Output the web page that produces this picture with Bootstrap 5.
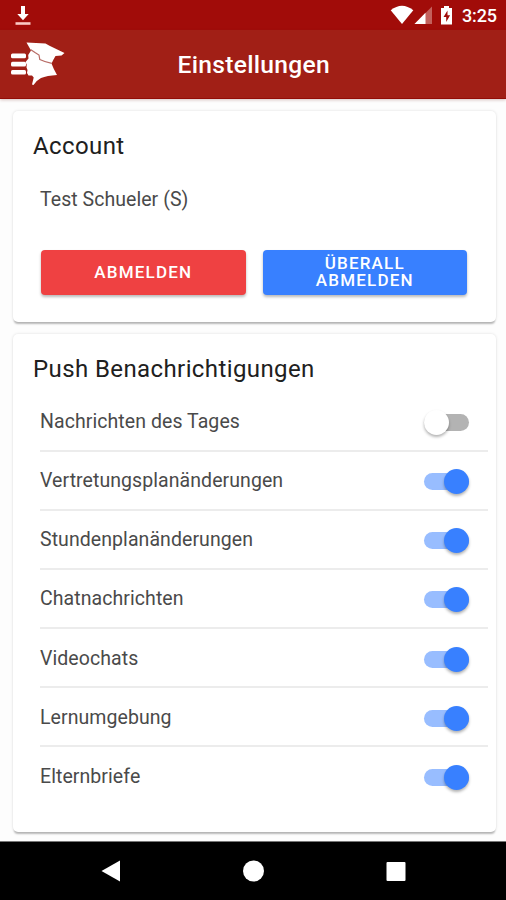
<!DOCTYPE html>
<html lang="de">
<head>
<meta charset="utf-8">
<meta name="viewport" content="width=device-width, initial-scale=1">
<title>Einstellungen</title>
<link href="https://cdn.jsdelivr.net/npm/bootstrap@5.3.0/dist/css/bootstrap.min.css" rel="stylesheet">
<style>
body{font-family:Roboto,"Liberation Sans",sans-serif;background:#fdfdfd;width:506px;height:900px;overflow:hidden;color:#222}
.status-bar{height:30px;background:#a10c09;padding:0 9px 0 14px}
.clock{font-size:18px;font-weight:500;line-height:30px;margin-left:7px;padding-top:2px;letter-spacing:-.1px}
.app-bar{height:69px;background:#a11f16;border-bottom:1px solid #920d07;box-shadow:0 1px 3px rgba(120,40,30,.28);z-index:1}
.app-title{font-size:24.6px;font-weight:500;letter-spacing:.3px;line-height:28px;padding-top:2px}
.app-bar .brand-logo{width:177.5px;padding-left:10px}
.main-area{padding:12px 10px 0 13px}
.panel{border:0;border-radius:5px;background:#fff;box-shadow:0 3px 2px -1px rgba(0,0,0,.26),0 0 3px rgba(0,0,0,.13)}
.account{height:211px;margin-bottom:12px}
.push{height:498px}
.panel-title{font-size:24px;font-weight:400;line-height:28px;letter-spacing:.4px;padding:21px 20px 0;margin:0 0 1px;color:#202020}
.user-name{font-size:19.5px;line-height:24px;margin:28px 0 0 27px;color:#4a4a4a;letter-spacing:.05px}
.actions{padding:38px 29px 0 28px;gap:17px}
.action-btn{height:44.5px;border:0;border-radius:4px;padding:0;font-size:17px;font-weight:500;line-height:17px;letter-spacing:1.2px;box-shadow:0 2px 3px rgba(0,0,0,.28);color:#fff}
.btn-logout,.btn-logout:hover{background:#ef4142;color:#fff}
.btn-all,.btn-all:hover{background:#3880ff;color:#fff}
.settings{margin:9.5px 8px 0 27px}
.setting{height:59.15px;border-bottom:2px solid #ececec;padding-right:19px;font-size:19.5px;letter-spacing:.07px;color:#4a4a4a;padding-top:1px}
.setting:last-child{border-bottom:0;height:58px}
.toggle{width:45px;height:17px;border-radius:9px;background:#98bdff;margin-top:2px}
.toggle::after{content:"";width:25px;height:25px;border-radius:50%;background:#3880ff;box-shadow:0 2px 3px rgba(0,0,0,.3);flex:none}
.toggle.off{background:#b3b3b3}
.toggle.off::after{background:#fff}
.nav-keys{height:59px;background:#000;border-top:1px solid #777}
</style>
<script src="https://cdn.jsdelivr.net/npm/bootstrap@5.3.0/dist/js/bootstrap.bundle.min.js"></script>
</head>
<body class="d-flex flex-column">
<div class="status-bar d-flex align-items-center text-white">
  <svg width="18" height="30" viewBox="0 0 18 30"><path d="M7 6h4v8h3.700L9 20.300 3.300 14H7z" fill="#fff"/><path d="M1.500 22.200h15v2.600h-15z" fill="#fbc9c5"/></svg>
  <svg class="ms-auto" width="66" height="30" viewBox="0 0 66 30"><path d="M1.700 10.300Q13 1.200 24.300 10.300L13 24z" fill="#fff"/><path d="M43 6.500V24H25.500z" fill="#c3605c"/><path d="M36.500 12.800V24H25.500z" fill="#fff"/><path d="M52 8h3V6h5v2h3v16.500H52z" fill="#fff"/><path d="M58.500 10.500L54.500 17h2.700v5l3.900-6.700h-2.600z" fill="#a10c09"/></svg>
  <span class="clock">3:25</span>
</div>
<header class="app-bar d-flex align-items-center text-white position-relative">
  <div class="brand-logo">
    <svg class="d-block" width="58" height="50" viewBox="10 39 58 50"><g fill="#fff"><rect x="11" y="53.500" width="15" height="4.700" rx="1.500"/><rect x="11" y="61.700" width="15" height="4.700" rx="1.500"/><rect x="11" y="69.900" width="15" height="4.700" rx="1.500"/><path d="M26.500 42.500L45.500 43.500 49.500 45.700 64.500 53 61.500 55.500 55.500 56 53.500 59.500 51.500 63.500Q53.500 69 57 75 47 75.500 41 78 37 80 33.500 85L32 84.500 33.700 77.500 32 75.500 28.500 75.500 27 73 27.500 70 26.500 67.500 26.700 64.500 25.500 62 28.500 58.500 28.200 55 31 50.500z"/></g><path d="M30.500 49.500l4.500 3 4 2.500.8 4.500q5 2.500 12 3.800" fill="none" stroke="#b76b65" stroke-width="1.200"/></svg>
  </div>
  <h1 class="app-title m-0">Einstellungen</h1>
</header>
<main class="main-area flex-grow-1">
  <section class="panel account">
    <h2 class="panel-title">Account</h2>
    <p class="user-name">Test Schueler (S)</p>
    <div class="actions d-flex">
      <button class="btn action-btn btn-logout w-50">ABMELDEN</button>
      <button class="btn action-btn btn-all w-50">ÜBERALL<br>ABMELDEN</button>
    </div>
  </section>
  <section class="panel push">
    <h2 class="panel-title">Push Benachrichtigungen</h2>
    <div class="settings">
      <div class="setting d-flex align-items-center justify-content-between"><span>Nachrichten des Tages</span><span class="toggle off d-flex align-items-center justify-content-start"></span></div>
      <div class="setting d-flex align-items-center justify-content-between"><span>Vertretungsplanänderungen</span><span class="toggle d-flex align-items-center justify-content-end"></span></div>
      <div class="setting d-flex align-items-center justify-content-between"><span>Stundenplanänderungen</span><span class="toggle d-flex align-items-center justify-content-end"></span></div>
      <div class="setting d-flex align-items-center justify-content-between"><span>Chatnachrichten</span><span class="toggle d-flex align-items-center justify-content-end"></span></div>
      <div class="setting d-flex align-items-center justify-content-between"><span>Videochats</span><span class="toggle d-flex align-items-center justify-content-end"></span></div>
      <div class="setting d-flex align-items-center justify-content-between"><span>Lernumgebung</span><span class="toggle d-flex align-items-center justify-content-end"></span></div>
      <div class="setting d-flex align-items-center justify-content-between"><span>Elternbriefe</span><span class="toggle d-flex align-items-center justify-content-end"></span></div>
    </div>
  </section>
</main>
<nav class="nav-keys d-flex justify-content-center">
  <svg width="506" height="58" viewBox="0 842 506 58" fill="#fff"><path d="M101.500 871L120 860.500v21z"/><circle cx="253.500" cy="871" r="10.500"/><rect x="386.500" y="862" width="19" height="19" rx="1"/></svg>
</nav>
</body>
</html>
